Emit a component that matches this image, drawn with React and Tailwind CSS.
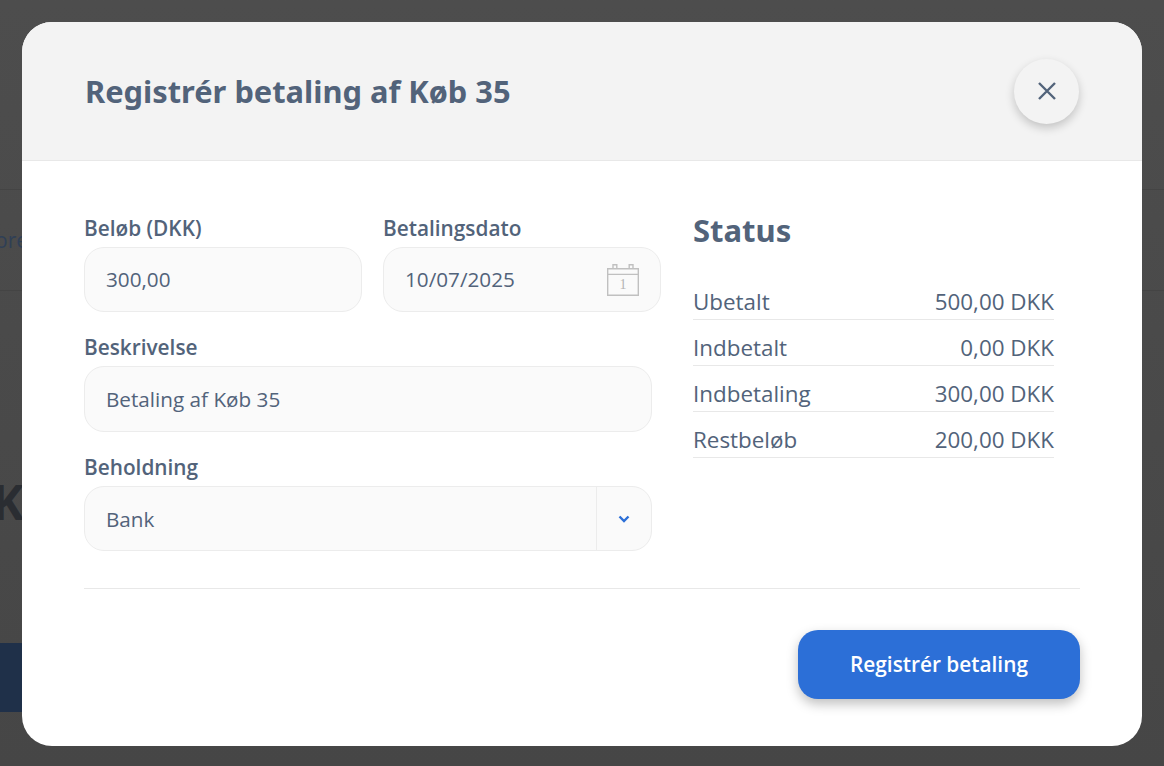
const sans = "font-['Open_Sans','Noto_Sans',sans-serif]";

function Field({ label, className = "", children }) {
  return (
    <div className={className}>
      <div className="text-[20.800px] leading-[26px] font-semibold text-[#52637a]">{label}</div>
      {children}
    </div>
  );
}

function Box({ children, className = "" }) {
  return (
    <div className={`mt-[6px] flex h-[65px] items-center rounded-[20px] border border-[#ececec] bg-[#fafafa] pl-[21px] text-[20.700px] text-[#52637a] ${className}`}>
      {children}
    </div>
  );
}

function Row({ label, value }) {
  return (
    <div className="flex h-[46px] items-end justify-between border-b border-[#e8e8e8] pb-[3px] text-[22.400px] leading-[29px] text-[#52637a]">
      <span>{label}</span>
      <span>{value}</span>
    </div>
  );
}

function Backdrop() {
  return (
    <div className="flex h-[766px] w-[1164px] flex-col bg-gradient-to-b from-[#4d4d4d] to-[#464646]">
      <div className="h-[190px] shrink-0 border-b border-[#444444]" />
      <div className="flex h-[101px] shrink-0 items-center border-b border-[#444444] pt-[2px] text-[21px] text-[#2f3f56]">
        <span className="-ml-[5px]">ore</span>
      </div>
      <div className="flex h-[352px] shrink-0 flex-col">
        <span className="-ml-[8px] mt-[183px] text-[48px] leading-[56px] font-bold text-[#2a2d32]">K</span>
      </div>
      <div className="h-[69px] w-[40px] shrink-0 bg-[#1f3049]" />
    </div>
  );
}

export default function App() {
  return (
    <div className={`${sans} relative h-[766px] w-[1164px] overflow-hidden`}>
      <Backdrop />
      <div className="absolute left-[22px] top-[22px] flex h-[724px] w-[1120px] flex-col overflow-hidden rounded-[30px] bg-white">
        <div className="flex h-[139px] shrink-0 items-center justify-between border-b border-[#e8e8e8] bg-[#f3f3f3] pl-[63px] pr-[63px]">
          <h1 className="font-['Noto_Sans',sans-serif] text-[30.800px] font-bold text-[#52637a]">Registrér betaling af Køb 35</h1>
          <button className="flex h-[65px] w-[65px] items-center justify-center rounded-full bg-[#f3f3f3] shadow-[0_4px_10px_rgba(0,0,0,0.2)]">
            <svg width="20" height="20" viewBox="0 0 20 20" fill="none" stroke="#52637a" strokeWidth="2.400">
              <path d="M2 2 18 18M18 2 2 18" />
            </svg>
          </button>
        </div>

        <div className="flex flex-col px-[62px]">
          <div className="flex">
            <div className="w-[577px] shrink-0 pt-[54px]">
              <div className="flex gap-[21px]">
                <Field label="Beløb (DKK)" className="w-[278px]"><Box><span className="pt-[1px]">300,00</span></Box></Field>
                <Field label="Betalingsdato" className="w-[278px]">
                  <Box className="justify-between pr-[21px]">
                    <span className="pt-[1px]">10/07/2025</span>
                    <svg width="32" height="32" viewBox="0 0 32 32" fill="none" stroke="#c0c0c0" strokeWidth="1.400">
                      <path d="M.7 4.700h30.600v26.600H.7zM.7 10.400h30.600M6 4.700V.7h3.800v4M22.200 4.700V.7H26v4" />
                      <text x="16" y="25" fontSize="14" opacity="0.99" fontFamily="'Liberation Serif',serif" textAnchor="middle" fill="#b4b4b4" stroke="none">1</text>
                    </svg>
                  </Box>
                </Field>
              </div>
              <Field label="Beskrivelse" className="mt-[22px] w-[568px]"><Box className="h-[66px]"><span className="pt-[1px]">Betaling af Køb 35</span></Box></Field>
              <Field label="Beholdning" className="mt-[22px] w-[568px]">
                <Box className="justify-between">
                  <span className="pt-[2px]">Bank</span>
                  <div className="flex h-full w-[55px] items-center justify-center border-l border-[#ececec] pr-[1px]">
                    <svg width="12" height="8" viewBox="0 0 12 8" fill="none" stroke="#2c6fd7" strokeWidth="2.400">
                      <path d="M1.500 1.500 6 6l4.500-4.500" />
                    </svg>
                  </div>
                </Box>
              </Field>
            </div>
            <div className="ml-[32px] w-[361px] pt-[50px]">
              <h2 className="font-['Noto_Sans',sans-serif] text-[31px] leading-[38px] font-bold text-[#52637a]">Status</h2>
              <div className="mt-[25px]">
                <Row label="Ubetalt" value="500,00 DKK" />
                <Row label="Indbetalt" value="0,00 DKK" />
                <Row label="Indbetaling" value="300,00 DKK" />
                <Row label="Restbeløb" value="200,00 DKK" />
              </div>
            </div>
          </div>
          <div className="mt-[37px] border-t border-[#e8e8e8]" />
          <div className="flex justify-end pt-[41px]">
            <button className="h-[69px] w-[282px] rounded-[20px] bg-[#2c6fd7] text-[20.800px] font-semibold text-white shadow-[0_5px_12px_rgba(0,0,0,0.25)]">
              Registrér betaling
            </button>
          </div>
        </div>
      </div>
    </div>
  );
}
